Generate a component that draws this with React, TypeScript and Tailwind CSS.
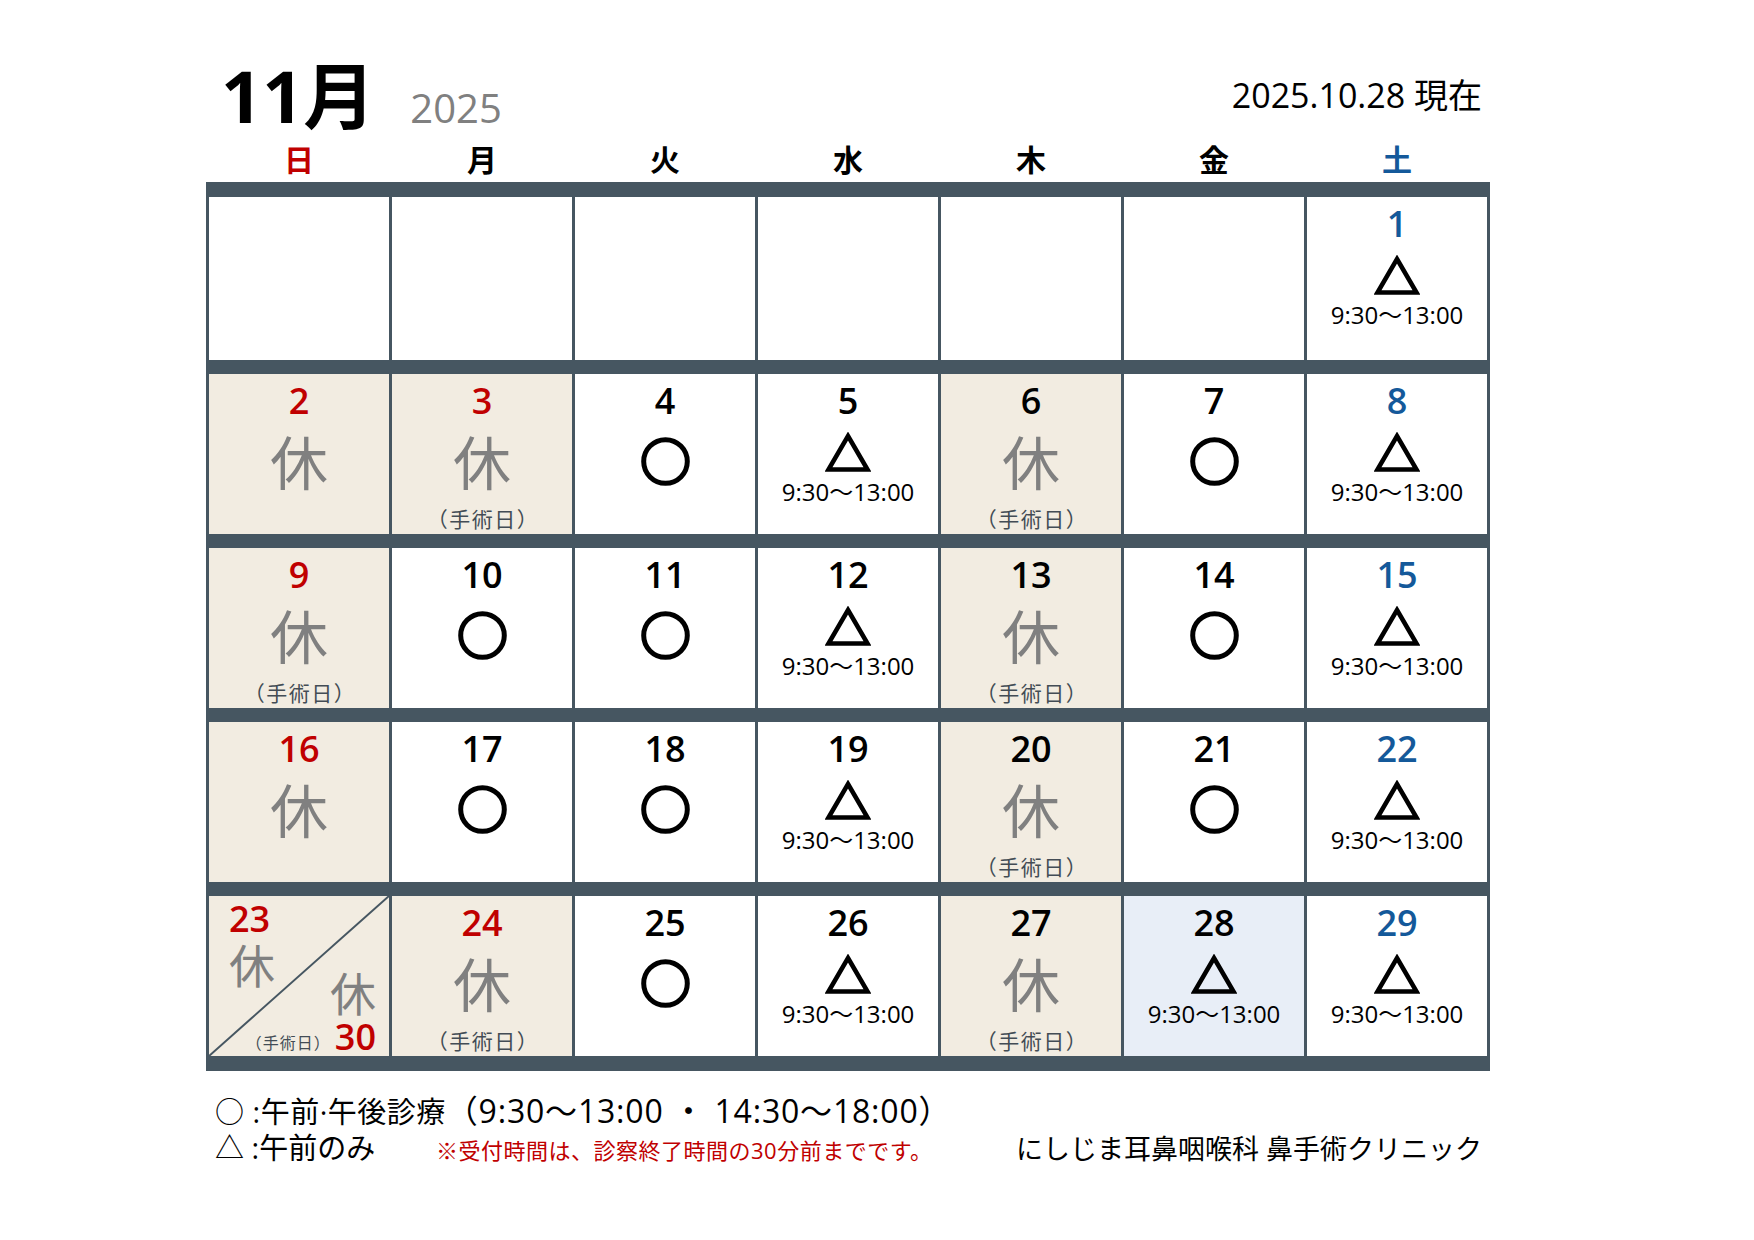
type Mark = 'o' | 'tri' | 'off'

interface Day {
  d?: number
  color?: 'red' | 'blue'
  mark?: Mark
  surgery?: boolean
  today?: boolean
  split?: boolean
}

const weeks: Day[][] = [
  [{}, {}, {}, {}, {}, {}, { d: 1, color: 'blue', mark: 'tri' }],
  [
    { d: 2, color: 'red', mark: 'off' },
    { d: 3, color: 'red', mark: 'off', surgery: true },
    { d: 4, mark: 'o' },
    { d: 5, mark: 'tri' },
    { d: 6, mark: 'off', surgery: true },
    { d: 7, mark: 'o' },
    { d: 8, color: 'blue', mark: 'tri' },
  ],
  [
    { d: 9, color: 'red', mark: 'off', surgery: true },
    { d: 10, mark: 'o' },
    { d: 11, mark: 'o' },
    { d: 12, mark: 'tri' },
    { d: 13, mark: 'off', surgery: true },
    { d: 14, mark: 'o' },
    { d: 15, color: 'blue', mark: 'tri' },
  ],
  [
    { d: 16, color: 'red', mark: 'off' },
    { d: 17, mark: 'o' },
    { d: 18, mark: 'o' },
    { d: 19, mark: 'tri' },
    { d: 20, mark: 'off', surgery: true },
    { d: 21, mark: 'o' },
    { d: 22, color: 'blue', mark: 'tri' },
  ],
  [
    { split: true },
    { d: 24, color: 'red', mark: 'off', surgery: true },
    { d: 25, mark: 'o' },
    { d: 26, mark: 'tri' },
    { d: 27, mark: 'off', surgery: true },
    { d: 28, mark: 'tri', today: true },
    { d: 29, color: 'blue', mark: 'tri' },
  ],
]

const weekdays = [
  { label: '日', cls: 'text-[#c00000]' },
  { label: '月', cls: 'text-black' },
  { label: '火', cls: 'text-black' },
  { label: '水', cls: 'text-black' },
  { label: '木', cls: 'text-black' },
  { label: '金', cls: 'text-black' },
  { label: '土', cls: 'text-[#14599a]' },
]

export default function App() {
  return (
    <div className="w-[1754px] h-[1240px] bg-white text-black font-['Open_Sans','Noto_Sans_CJK_JP',sans-serif]">
      <div className="ml-[206px] w-[1284px]">
        <header className="flex justify-between h-[137px]">
          <div className="flex items-baseline pt-[59px] pl-[15px]">
            <span className="text-[72px] leading-[72px] font-bold">11月</span>
            <span className="ml-[35px] text-[40px] leading-[40px] text-[#808080]">2025</span>
          </div>
          <div className="pt-[78px] pr-[8px] text-[34px] leading-[34px]">2025.10.28 現在</div>
        </header>

        <div className="grid grid-cols-7 gap-[3px] px-[3px] h-[45px] items-center">
          {weekdays.map(w => (
            <div key={w.label} className={`text-center text-[30px] leading-[30px] font-bold ${w.cls}`}>
              {w.label}
            </div>
          ))}
        </div>

        <div className="flex flex-col bg-[#465661] px-[3px] pt-[15px] pb-[15px] gap-[14px]">
          {weeks.map((week, i) => (
            <div key={i} className={`grid grid-cols-7 grid-rows-1 gap-[3px] ${i === 0 ? 'h-[163px]' : 'h-[160px]'}`}>
              {week.map((day, j) => (
                <Cell key={j} day={day} />
              ))}
            </div>
          ))}
        </div>

        <div className="mt-[23px] pl-[9px] pr-[8px]">
          <p className="text-[29px] leading-[34px] tracking-[0.5px]">
            ○ :午前·午後診療<span className="text-[32px] tracking-[0.8px]">（9:30～13:00 ・ 14:30～18:00）</span>
          </p>
          <div className="mt-[2px] flex items-baseline">
            <span className="w-[221px] text-[29px] leading-[34px]">△ :午前のみ</span>
            <span className="text-[22px] leading-[34px] tracking-[0.5px] text-[#c00000]">
              ※受付時間は、診察終了時間の30分前までです。
            </span>
            <span className="ml-auto text-[27px] leading-[34px]">にしじま耳鼻咽喉科 鼻手術クリニック</span>
          </div>
        </div>
      </div>
    </div>
  )
}

function Cell({ day }: { day: Day }) {
  if (day.split) return <SplitCell />

  const bg = day.mark === 'off' ? 'bg-[#f2ece1]' : day.today ? 'bg-[#e8eef7]' : 'bg-white'
  const color =
    day.color === 'red' ? 'text-[#c00000]' : day.color === 'blue' ? 'text-[#14599a]' : 'text-black'

  return (
    <div className={`${bg} min-h-0 flex flex-col items-center pt-[7px]`}>
      {day.d && <span className={`${color} text-[36px] leading-[40px] font-semibold`}>{day.d}</span>}
      {day.mark === 'tri' && (
        <>
          <Triangle className="mt-[11px] w-[46px] h-[40px]" />
          <span className="mt-[8px] text-[24px] leading-[24px]">9:30～13:00</span>
        </>
      )}
      {day.mark === 'o' && <Circle className="mt-[16px] w-[49px] h-[49px]" />}
      {day.mark === 'off' && (
        <>
          <span className="mt-[13px] text-[58px] leading-[58px] text-[#808080]">休</span>
          {day.surgery && (
            <span className="mt-[16px] pl-[2px] text-[21px] leading-[22px] tracking-[1.5px] text-[#434c55]">（手術日）</span>
          )}
        </>
      )}
    </div>
  )
}

function SplitCell() {
  return (
    <div className="relative min-h-0 bg-[#f2ece1] grid">
      <svg className="absolute inset-0 w-full h-full" viewBox="0 0 100 100" preserveAspectRatio="none" aria-hidden="true">
        <line x1="0" y1="100" x2="100" y2="0" stroke="#465661" strokeWidth={2} vectorEffect="non-scaling-stroke" />
      </svg>
      <div className="relative [grid-area:1/1] self-start flex flex-col items-start pl-[20px] pt-[3px]">
        <span className="text-[36px] leading-[40px] font-semibold text-[#c00000]">23</span>
        <span className="mt-[3px] text-[46px] leading-[46px] text-[#808080]">休</span>
      </div>
      <div className="relative [grid-area:1/1] self-end flex flex-col items-end pr-[13px] pb-[1px]">
        <span className="text-[46px] leading-[46px] text-[#808080]">休</span>
        <div className="mt-[3px] flex items-end">
          <span className="mb-[4px] mr-[4px] text-[16px] leading-[16px] tracking-[1px] text-[#434c55]">（手術日）</span>
          <span className="text-[36px] leading-[36px] font-semibold text-[#c00000]">30</span>
        </div>
      </div>
    </div>
  )
}

function Triangle({ className }: { className?: string }) {
  return (
    <svg className={className} viewBox="0 0 46 40" fill="none" aria-hidden="true">
      <polygon points="23,4 42.5,37.5 3.5,37.5" stroke="black" strokeWidth={4.5} strokeLinejoin="miter" />
    </svg>
  )
}

function Circle({ className }: { className?: string }) {
  return (
    <svg className={className} viewBox="0 0 49 49" fill="none" aria-hidden="true">
      <circle cx="24.5" cy="24.5" r="21.8" stroke="black" strokeWidth={5} />
    </svg>
  )
}
